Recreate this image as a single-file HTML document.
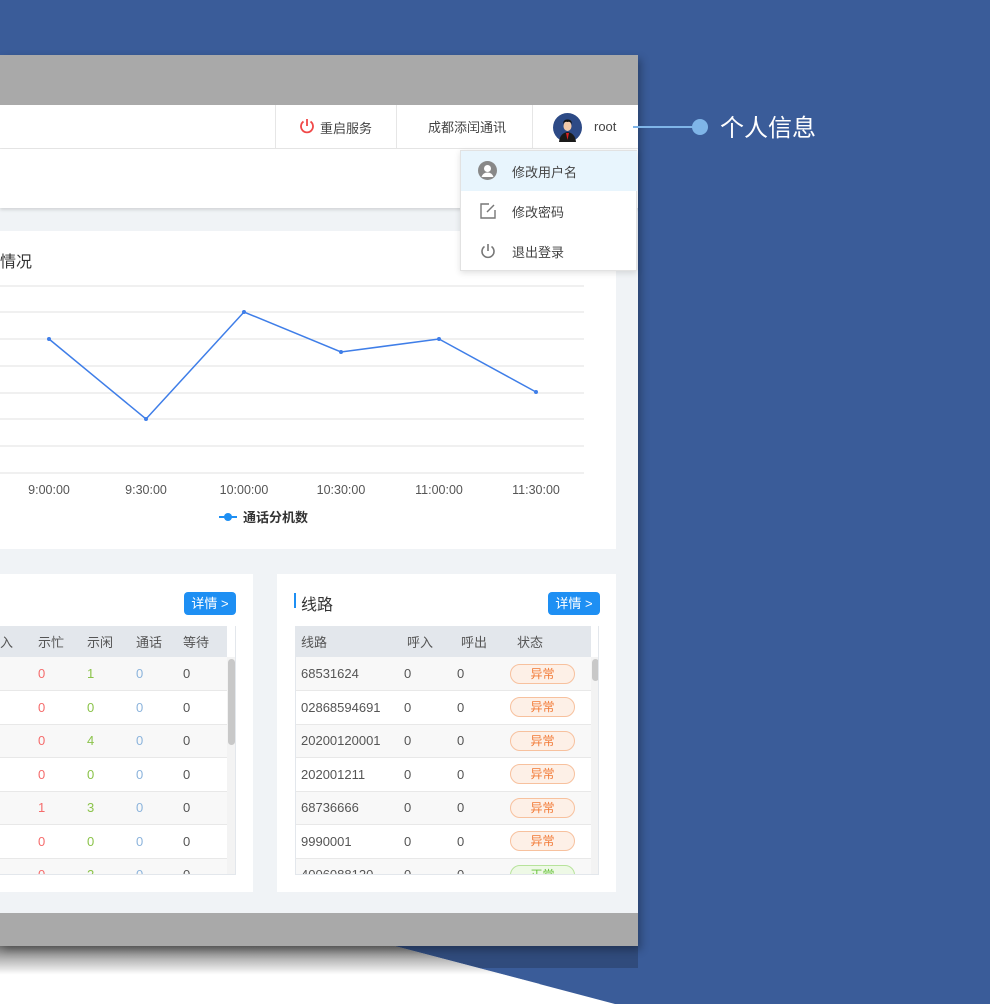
<!DOCTYPE html>
<html><head><meta charset="utf-8"><style>
*{margin:0;padding:0;box-sizing:border-box}
body{width:990px;height:1004px;position:relative;overflow:hidden;background:#3a5c99;font-family:"Liberation Sans","Noto Sans CJK SC",sans-serif;color:#333}
.abs{position:absolute}
.hdr{left:0;top:105px;width:638px;height:44px;background:#fff;border-bottom:1px solid #e6e6e6;font-size:13px;color:#444}
.sep{top:0;width:1px;height:44px;background:#e6e6e6}
.card{background:#fff}
table{border-collapse:collapse;font-size:13px;color:#555;table-layout:fixed}
td,th{height:33.5px;font-weight:normal;text-align:left;border-bottom:1px solid #e8e8e8;white-space:nowrap;overflow:hidden}
th{background:#e3e7ec;height:31px;border:none;color:#555}
tr.s td{background:#f8f8f8}
.r{color:#f56c6c}.g{color:#8bc34a}.b{color:#8cb4dc}
.tag{display:inline-block;width:65px;height:20px;border:1px solid #f7c19e;background:#fdf0e7;color:#f27a36;border-radius:10px;text-align:center;line-height:18px;font-size:12px}
.tag.ok{border-color:#b7e39b;background:#eef9e6;color:#67c23a}
.btn{background:#1e8ff3;color:#fff;font-size:13px;width:52px;height:23px;border-radius:4px;text-align:center;line-height:23px}
.dd{font-size:13px;color:#444}
</style></head><body>
<svg class="abs" style="left:0;top:940px" width="990" height="64"><defs><linearGradient id="sh" x1="0" y1="0" x2="0" y2="1"><stop offset="0" stop-color="#555"/><stop offset="0.75" stop-color="#fff"/></linearGradient></defs>
<polygon points="0,6 395,6 615,64 0,64" fill="#fff"/>
<polygon points="0,6 395,6 540,44 0,44" fill="url(#sh)" opacity="0.8"/>
<polygon points="395,6 638,6 638,28 480,28" fill="#253a60" opacity="0.5"/>
</svg>
<div class="abs" style="left:0;top:55px;width:638px;height:891px;background:#a9a9a9;box-shadow:3px 4px 8px rgba(0,0,0,.3)"></div>
<div class="abs" style="left:0;top:105px;width:638px;height:808px;background:#f0f3f6"></div>
<div class="abs hdr">
 <div class="abs sep" style="left:275px"></div><div class="abs sep" style="left:396px"></div><div class="abs sep" style="left:532px"></div>
 <svg class="abs" style="left:299px;top:13px" width="16" height="16" viewBox="0 0 16 16"><path d="M4.5 3.5A6 6 0 1 0 11.5 3.5" fill="none" stroke="#f04848" stroke-width="1.8"/><path d="M8 1v7" stroke="#f04848" stroke-width="1.8"/></svg>
 <div class="abs" style="left:320px;top:13px">重启服务</div>
 <div class="abs" style="left:428px;top:12px">成都添闰通讯</div>
 <svg class="abs" style="left:553px;top:8px" width="29" height="29" viewBox="0 0 29 29"><circle cx="14.5" cy="14.5" r="14.5" fill="#2d4a86"/><path d="M6 29 Q7 20 14.5 19 Q22 20 23 29Z" fill="#1a1a1a"/><path d="M13 20l1.5 7 1.5-7z" fill="#d22"/><ellipse cx="14.5" cy="13" rx="4" ry="5" fill="#f2c9a8"/><path d="M10 12Q10 6 14.5 6.5Q19 6 19 12Q18 8 14.5 9Q11 8 10 12Z" fill="#111"/></svg>
 <div class="abs" style="left:594px;top:14px">root</div>
</div>
<div class="abs" style="left:633px;top:126px;width:67px;height:2px;background:#7fb5e8"></div>
<div class="abs" style="left:692px;top:119px;width:16px;height:16px;border-radius:50%;background:#7fb5e8"></div>
<div class="abs" style="left:720px;top:108px;font-size:24px;color:#fff">个人信息</div>
<div class="abs card" style="left:0;top:149px;width:638px;height:59px;box-shadow:0 2px 3px rgba(0,0,0,.12)"></div>
<div class="abs card" style="left:0;top:231px;width:616px;height:318px"></div>
<div class="abs" style="left:0;top:248px;font-size:16px;color:#333">情况</div>
<svg class="abs" style="left:0;top:280px" width="600" height="250">
<g stroke="#ececec" stroke-width="1.5"><line x1="0" y1="6" x2="584" y2="6"/><line x1="0" y1="32" x2="584" y2="32"/><line x1="0" y1="59" x2="584" y2="59"/><line x1="0" y1="86" x2="584" y2="86"/><line x1="0" y1="113" x2="584" y2="113"/><line x1="0" y1="139" x2="584" y2="139"/><line x1="0" y1="166" x2="584" y2="166"/><line x1="0" y1="193" x2="584" y2="193"/></g>
<polyline points="49,59 146,139 244,32 341,72 439,59 536,112" fill="none" stroke="#3f7ee8" stroke-width="1.5"/>
<g fill="#3f7ee8"><circle cx="49" cy="59" r="2"/><circle cx="146" cy="139" r="2"/><circle cx="244" cy="32" r="2"/><circle cx="341" cy="72" r="2"/><circle cx="439" cy="59" r="2"/><circle cx="536" cy="112" r="2"/></g>
<g font-size="12.5" fill="#555" text-anchor="middle" font-family="Liberation Sans"><text x="49" y="214">9:00:00</text><text x="146" y="214">9:30:00</text><text x="244" y="214">10:00:00</text><text x="341" y="214">10:30:00</text><text x="439" y="214">11:00:00</text><text x="536" y="214">11:30:00</text></g>
<line x1="219" y1="237" x2="237" y2="237" stroke="#1e8ff3" stroke-width="2"/><circle cx="228" cy="237" r="4" fill="#1e8ff3"/>
<text x="243" y="242" font-size="13" font-weight="bold" fill="#333" font-family="Liberation Sans,Noto Sans CJK SC">通话分机数</text>
</svg>
<div class="abs" style="left:460px;top:150px;width:177px;height:121px;background:#fff;border:1px solid #e2e2e2;box-shadow:0 2px 6px rgba(0,0,0,.12)">
 <div class="abs" style="left:0;top:0;width:176px;height:40px;background:#e8f5fd"></div>
 <svg class="abs" style="left:17px;top:10px" width="19" height="19" viewBox="0 0 19 19"><circle cx="9.5" cy="9.5" r="9.5" fill="#888"/><circle cx="9.5" cy="7.5" r="3.5" fill="#fff"/><path d="M3.5 16Q5 11.5 9.5 11.5Q14 11.5 15.5 16" fill="#fff"/></svg>
 <div class="abs dd" style="left:51px;top:11px">修改用户名</div>
 <svg class="abs" style="left:19px;top:52px" width="16" height="16" viewBox="0 0 16 16"><path d="M9 1H1v14h14V7" fill="none" stroke="#777" stroke-width="1.4"/><path d="M7 9l7-7" stroke="#777" stroke-width="1.4"/></svg>
 <div class="abs dd" style="left:51px;top:51px">修改密码</div>
 <svg class="abs" style="left:19px;top:92px" width="16" height="16" viewBox="0 0 16 16"><path d="M4.5 3.5A6 6 0 1 0 11.5 3.5" fill="none" stroke="#777" stroke-width="1.6"/><path d="M8 1v7" stroke="#777" stroke-width="1.6"/></svg>
 <div class="abs dd" style="left:51px;top:91px">退出登录</div>
</div>
<div class="abs card" style="left:0;top:574px;width:253px;height:318px"></div>
<div class="abs btn" style="left:184px;top:592px">详情 &gt;</div>
<div class="abs" style="left:0;top:626px;width:236px;height:249px;overflow:hidden;border-right:1px solid #e3e7ec;border-bottom:1px solid #e3e7ec">
<table style="width:247px;margin-left:-20px">
<colgroup><col style="width:58px"><col style="width:49px"><col style="width:49px"><col style="width:47px"><col style="width:44px"></colgroup>
<tr><th style="padding-left:20px">入</th><th>示忙</th><th>示闲</th><th>通话</th><th>等待</th></tr>
<tr class="s"><td></td><td class="r">0</td><td class="g">1</td><td class="b">0</td><td>0</td></tr>
<tr><td></td><td class="r">0</td><td class="g">0</td><td class="b">0</td><td>0</td></tr>
<tr class="s"><td></td><td class="r">0</td><td class="g">4</td><td class="b">0</td><td>0</td></tr>
<tr><td></td><td class="r">0</td><td class="g">0</td><td class="b">0</td><td>0</td></tr>
<tr class="s"><td></td><td class="r">1</td><td class="g">3</td><td class="b">0</td><td>0</td></tr>
<tr><td></td><td class="r">0</td><td class="g">0</td><td class="b">0</td><td>0</td></tr>
<tr class="s"><td></td><td class="r">0</td><td class="g">2</td><td class="b">0</td><td>0</td></tr>
</table>
<div class="abs" style="left:227px;top:31px;width:9px;height:218px;background:#f3f3f3"></div>
<div class="abs" style="left:228px;top:33px;width:7px;height:86px;background:#c8c8c8;border-radius:4px"></div>
</div>
<div class="abs card" style="left:277px;top:574px;width:339px;height:318px"></div>
<div class="abs" style="left:294px;top:593px;width:2px;height:15px;background:#1e8ff3"></div>
<div class="abs" style="left:301px;top:591px;font-size:16px;color:#333">线路</div>
<div class="abs btn" style="left:548px;top:592px">详情 &gt;</div>
<div class="abs" style="left:295px;top:626px;width:304px;height:249px;overflow:hidden;border:1px solid #e3e7ec;border-top:none">
<table style="width:295px">
<colgroup><col style="width:108px"><col style="width:53px"><col style="width:53px"><col></colgroup>
<tr><th style="padding-left:5px">线路</th><th style="padding-left:3px">呼入</th><th style="padding-left:4px">呼出</th><th style="padding-left:7px">状态</th></tr>
<tr class="s"><td style="padding-left:5px">68531624</td><td>0</td><td>0</td><td><span class="tag">异常</span></td></tr>
<tr><td style="padding-left:5px">02868594691</td><td>0</td><td>0</td><td><span class="tag">异常</span></td></tr>
<tr class="s"><td style="padding-left:5px">20200120001</td><td>0</td><td>0</td><td><span class="tag">异常</span></td></tr>
<tr><td style="padding-left:5px">202001211</td><td>0</td><td>0</td><td><span class="tag">异常</span></td></tr>
<tr class="s"><td style="padding-left:5px">68736666</td><td>0</td><td>0</td><td><span class="tag">异常</span></td></tr>
<tr><td style="padding-left:5px">9990001</td><td>0</td><td>0</td><td><span class="tag">异常</span></td></tr>
<tr class="s"><td style="padding-left:5px">4006088120</td><td>0</td><td>0</td><td><span class="tag ok">正常</span></td></tr>
</table>
<div class="abs" style="left:295px;top:31px;width:9px;height:218px;background:#f3f3f3"></div>
<div class="abs" style="left:296px;top:33px;width:7px;height:22px;background:#c8c8c8;border-radius:4px"></div>
</div>
</body></html>
